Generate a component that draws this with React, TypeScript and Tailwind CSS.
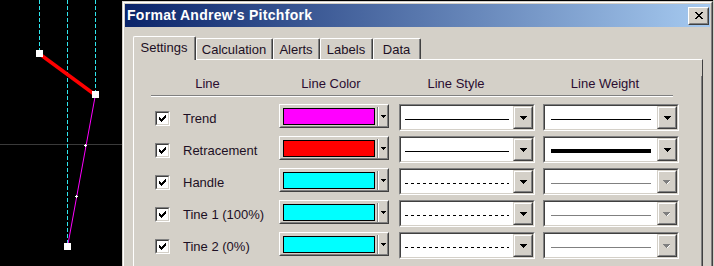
import React from "react";

type Row = {
  name: string;
  swatch: string;
  dashed: boolean;
  thick: boolean;
  enabled: boolean;
};

const rows: Row[] = [
  { name: "Trend", swatch: "bg-[#ff00ff]", dashed: false, thick: false, enabled: true },
  { name: "Retracement", swatch: "bg-[#ff0000]", dashed: false, thick: true, enabled: true },
  { name: "Handle", swatch: "bg-[#00ffff]", dashed: true, thick: false, enabled: false },
  { name: "Tine 1 (100%)", swatch: "bg-[#00ffff]", dashed: true, thick: false, enabled: false },
  { name: "Tine 2 (0%)", swatch: "bg-[#00ffff]", dashed: true, thick: false, enabled: false },
];

const tabs = [
  { label: "Settings", w: "w-[63px]" },
  { label: "Calculation", w: "w-[77px]" },
  { label: "Alerts", w: "w-[47px]" },
  { label: "Labels", w: "w-[53px]" },
  { label: "Data", w: "w-[48px]" },
];

const COLORS: Record<string, string> = { "#": "#000000", g: "#808080", w: "#ffffff" };

// tiny pixel glyphs (checkmark, close X, combo arrows)
function Pixels({ rows }: { rows: string[] }) {
  return (
    <svg width={rows[0].length} height={rows.length} shapeRendering="crispEdges" className="block">
      {rows.flatMap((r, y) =>
        r.split("").map((c, x) =>
          COLORS[c] ? <rect key={`${x}-${y}`} x={x} y={y} width="1" height="1" fill={COLORS[c]} /> : null
        )
      )}
    </svg>
  );
}

const CHECK = ["......#", ".....##", "#...###", "##.###.", "#####..", ".###...", "..#...."];
const CLOSE = ["##....##", ".##..##.", "..####..", "...##...", "..####..", ".##..##.", "##....##"];
const ARROW = ["#######", ".#####.", "..###..", "...#..."];
const ARROW_OFF = ["ggggggg.", ".gggggw.", "..gggw..", "...gw...", "........"];
const ARROW_SMALL = ["#####", ".###.", "..#.."];

function Chart() {
  return (
    <svg width="122" height="266" className="block shrink-0">
      <line x1="0" y1="144.5" x2="122" y2="144.5" stroke="#3a3a3a" />
      <line x1="39.5" y1="0" x2="39.5" y2="50" stroke="#2ee6ee" strokeDasharray="4 2" />
      <line x1="67.5" y1="0" x2="67.5" y2="243" stroke="#2ee6ee" strokeDasharray="4 2" />
      <line x1="95.5" y1="0" x2="95.5" y2="91" stroke="#2ee6ee" strokeDasharray="4 2" />
      <line x1="41" y1="55" x2="94" y2="94" stroke="#ff0000" strokeWidth="3.5" />
      <line x1="95" y1="97" x2="68" y2="244" stroke="#ff00ff" strokeWidth="1" />
      <rect x="36" y="50" width="7" height="7" fill="#fff" />
      <rect x="92" y="91" width="7" height="7" fill="#fff" />
      <rect x="64" y="243" width="7" height="7" fill="#fff" />
      <path d="M84 145.5h3M85.5 144v3" stroke="#fff" />
      <path d="M75 196.5h3M76.5 195v3" stroke="#fff" />
    </svg>
  );
}

function Sunken({ className = "", children }: { className?: string; children: React.ReactNode }) {
  return (
    <div className={`border border-t-[#808080] border-l-[#808080] border-r-white border-b-white ${className}`}>
      <div className="flex h-full w-full border border-t-[#404040] border-l-[#404040] border-r-[#d4d0c8] border-b-[#d4d0c8] bg-white">
        {children}
      </div>
    </div>
  );
}

function DropButton({ enabled }: { enabled: boolean }) {
  return (
    <div className="h-full w-[20px] border border-t-[#d4d0c8] border-l-[#d4d0c8] border-r-[#404040] border-b-[#404040] bg-[#d4d0c8]">
      <div className="flex h-full w-full items-center justify-center border border-t-white border-l-white border-r-[#808080] border-b-[#808080] pt-px">
        <Pixels rows={enabled ? ARROW : ARROW_OFF} />
      </div>
    </div>
  );
}

function DashLine() {
  return (
    <svg width="104" height="1" shapeRendering="crispEdges" className="block">
      <line x1="0" y1="0.5" x2="104" y2="0.5" stroke="#000" strokeDasharray="3 3" />
    </svg>
  );
}

function ColorCombo({ swatch }: { swatch: string }) {
  return (
    <div className="h-[24px] w-[110px] border border-t-white border-l-white border-r-[#404040] border-b-[#404040]">
      <div className="flex h-full w-full items-center border border-t-[#d4d0c8] border-l-[#d4d0c8] border-r-[#808080] border-b-[#808080] pl-[2px]">
        <div className={`h-[17px] w-[92px] border border-black ${swatch}`} />
        <div className="ml-[2px] h-[19px] w-[2px] border-l border-l-[#808080] border-r border-r-white" />
        <div className="ml-[2px]">
          <Pixels rows={ARROW_SMALL} />
        </div>
      </div>
    </div>
  );
}

function Checkbox() {
  return (
    <div className="h-[15px] w-[15px] shrink-0 border border-t-[#808080] border-l-[#808080] border-r-white border-b-white">
      <div className="flex h-full w-full items-center justify-center border border-t-[#404040] border-l-[#404040] border-r-[#d4d0c8] border-b-[#d4d0c8] bg-white">
        <Pixels rows={CHECK} />
      </div>
    </div>
  );
}

function LineRow({ row }: { row: Row }) {
  return (
    <div className="flex h-[27px] items-start">
      <div className="ml-[21px] mt-[7px]">
        <Checkbox />
      </div>
      <span className="ml-[13px] mt-[7px] w-[96px] text-[13px] leading-[16px] text-[#1c0f24]">{row.name}</span>
      <ColorCombo swatch={row.swatch} />

      <Sunken className="ml-[10px] h-[27px] w-[136px]">
        <div className="flex flex-1 items-center pl-[4px] pt-[3px]">
          {row.dashed ? <DashLine /> : <div className="h-px w-[104px] bg-black" />}
        </div>
        <DropButton enabled />
      </Sunken>

      <Sunken className="ml-[8px] h-[27px] w-[136px]">
        <div className="flex flex-1 items-center pl-[6px] pt-[3px]">
          {row.thick ? (
            <div className="h-[4px] w-[100px] bg-black" />
          ) : (
            <div className={`h-px w-[100px] ${row.enabled ? "bg-black" : "bg-[#808080]"}`} />
          )}
        </div>
        <DropButton enabled={row.enabled} />
      </Sunken>
    </div>
  );
}

export default function App() {
  return (
    <div className="flex h-[266px] w-[714px] overflow-hidden bg-black font-['Liberation_Sans',Arial,sans-serif]">
      <Chart />

      {/* dialog window */}
      <div className="mt-px h-[290px] w-[591px] shrink-0 border border-t-[#d4d0c8] border-l-[#d4d0c8] border-r-[#404040] border-b-[#404040]">
        <div className="flex h-full flex-col border border-t-white border-l-white border-r-[#808080] border-b-[#808080] bg-[#d4d0c8] p-px">
          <div className="flex h-[23px] shrink-0 items-center bg-linear-to-r/srgb from-[#0a246a] to-[#a6caf0] pl-[2px] pr-px">
            <span className="flex-1 text-[14px] font-bold tracking-[0.3px] text-white">Format Andrew's Pitchfork</span>
            <div className="h-[18px] w-[21px] border border-t-white border-l-white border-r-[#404040] border-b-[#404040] bg-[#d4d0c8]">
              <div className="flex h-full w-full items-center justify-center border border-t-[#d4d0c8] border-l-[#d4d0c8] border-r-[#808080] border-b-[#808080]">
                <Pixels rows={CLOSE} />
              </div>
            </div>
          </div>

          {/* tabs */}
          <div className="relative z-10 ml-[8px] mt-[9px] flex h-[23px] shrink-0 items-end">
            {tabs.map((t, i) => (
              <div
                key={t.label}
                className={`${t.w} rounded-t-[2px] border-l border-t border-r border-l-white border-t-white border-r-[#404040] bg-[#d4d0c8] ${
                  i === 0 ? "-mb-px h-[24px]" : "h-[21px]"
                }`}
              >
                <div className="h-full border-r border-r-[#808080] pt-[3px] text-center text-[13px] leading-[16px] text-[#1c0f24]">
                  {t.label}
                </div>
              </div>
            ))}
          </div>

          {/* tab panel */}
          <div className="ml-[8px] w-[570px] flex-1 border-l border-t border-r border-l-white border-t-white border-r-[#404040]">
            <div className="h-full border-r border-r-[#808080]">
              <div className="mt-[16px] flex text-[13px] leading-[16px] text-[#2a0c30]">
                <span className="ml-[17px] w-[113px] text-center">Line</span>
                <span className="w-[134px] text-center">Line Color</span>
                <span className="w-[116px] text-center">Line Style</span>
                <span className="w-[182px] text-center">Line Weight</span>
              </div>
              <div className="ml-[17px] mt-[3px] h-[2px] w-[522px] border-t border-t-[#808080] border-b border-b-white" />

              <div className="mt-[7px] flex flex-col gap-[5px]">
                {rows.map((r) => (
                  <LineRow key={r.name} row={r} />
                ))}
              </div>
            </div>
          </div>
        </div>
      </div>

      <div className="w-px shrink-0 bg-[#d4d0c8]" />
    </div>
  );
}
